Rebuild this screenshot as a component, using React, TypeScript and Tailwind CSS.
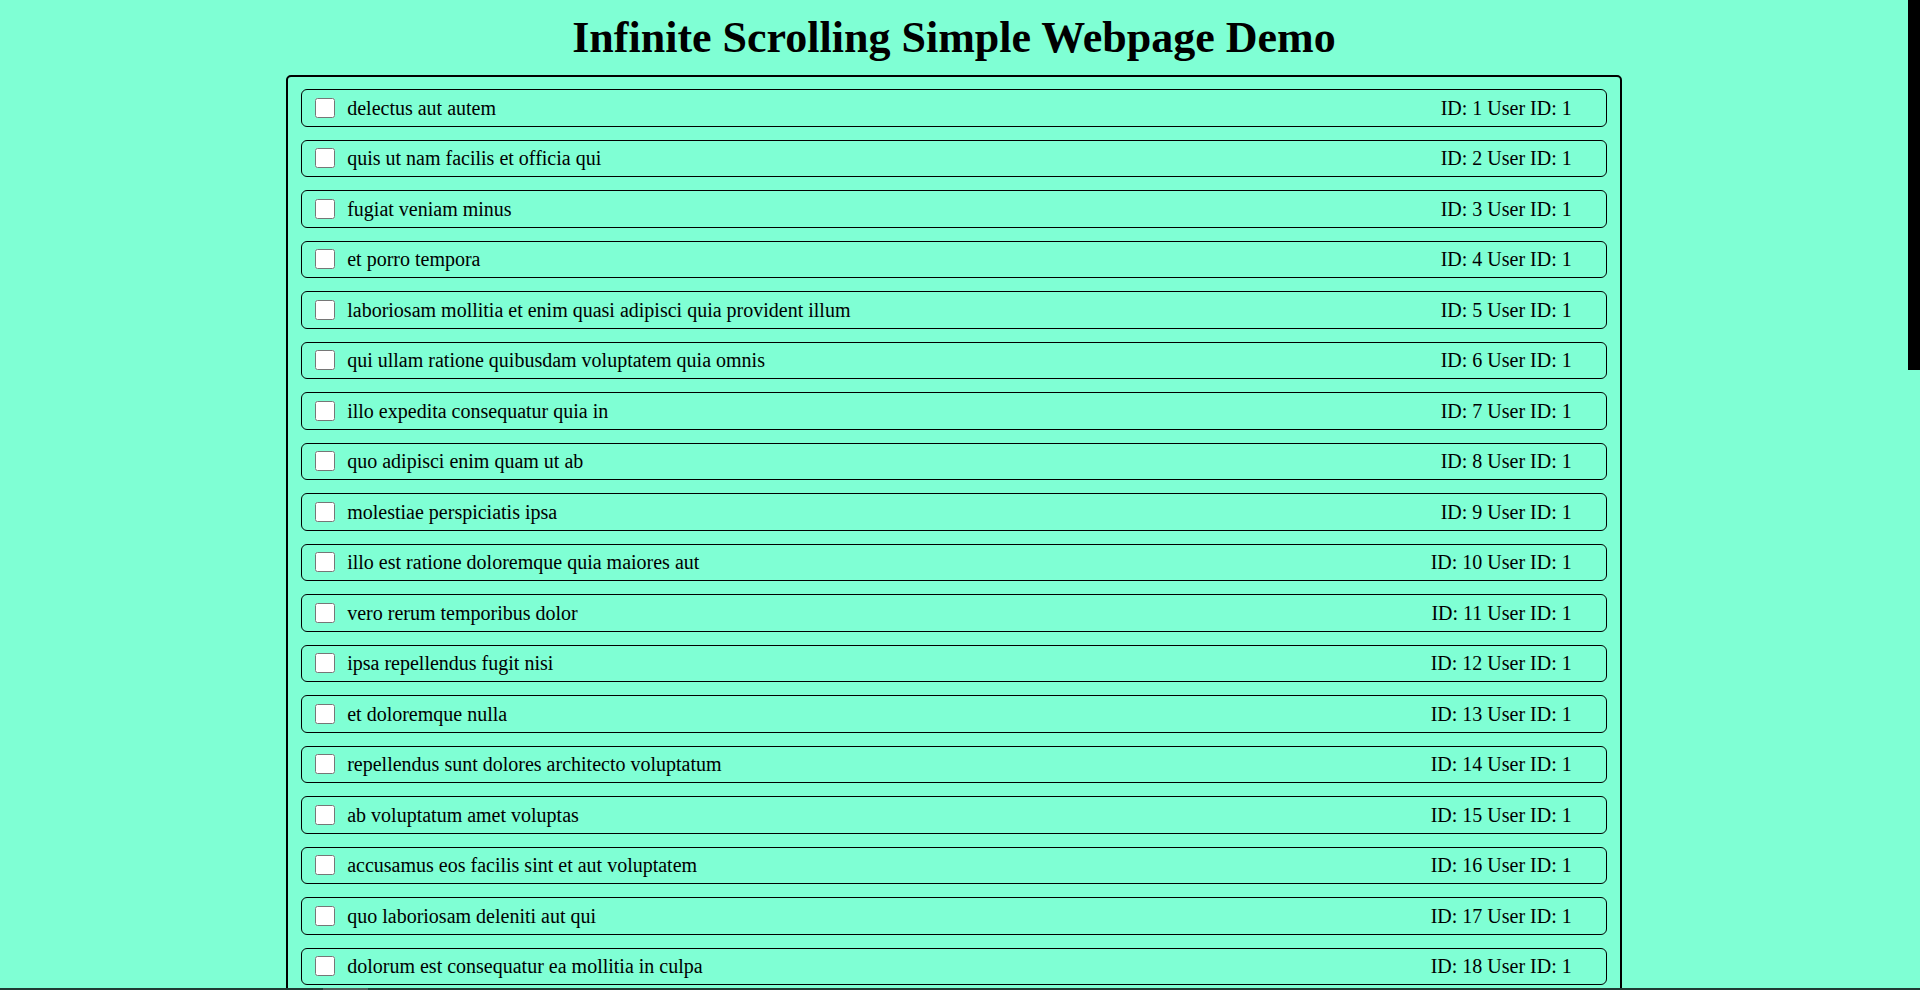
import React from 'react';

const todos: string[] = [
  'delectus aut autem',
  'quis ut nam facilis et officia qui',
  'fugiat veniam minus',
  'et porro tempora',
  'laboriosam mollitia et enim quasi adipisci quia provident illum',
  'qui ullam ratione quibusdam voluptatem quia omnis',
  'illo expedita consequatur quia in',
  'quo adipisci enim quam ut ab',
  'molestiae perspiciatis ipsa',
  'illo est ratione doloremque quia maiores aut',
  'vero rerum temporibus dolor',
  'ipsa repellendus fugit nisi',
  'et doloremque nulla',
  'repellendus sunt dolores architecto voluptatum',
  'ab voluptatum amet voluptas',
  'accusamus eos facilis sint et aut voluptatem',
  'quo laboriosam deleniti aut qui',
  'dolorum est consequatur ea mollitia in culpa',
];

function TodoRow({ id, title }: { id: number; title: string }) {
  return (
    <div className="h-[37.5px] shrink-0 flex items-center border border-black rounded-[6px] pl-[13px] pr-[34px]">
      <input type="checkbox" className="w-5 h-5 m-0 shrink-0" />
      <span className="ml-3 flex-1">{title}</span>
      <span>ID: {id} User ID: 1</span>
    </div>
  );
}

export default function App() {
  return (
    <div
      className="relative flex w-full h-screen overflow-hidden bg-[#7fffd4] text-black text-[20px]"
      style={{ fontFamily: '"Liberation Serif", "Times New Roman", serif' }}
    >
      <main className="flex-1 min-w-0 h-full overflow-hidden">
        <h1 className="text-center font-bold text-[44px] leading-[51px] mt-[12px] mb-[12px]">
          Infinite Scrolling Simple Webpage Demo
        </h1>
        <div className="w-[70%] mx-auto border-2 border-black rounded-[5px] pt-3 px-[13px] pb-3 flex flex-col gap-[13px]">
          {todos.map((t, i) => (
            <TodoRow key={i} id={i + 1} title={t} />
          ))}
        </div>
      </main>

      {/* scrollbar */}
      <div className="w-3 shrink-0 h-full">
        <div className="w-3 h-[370px] bg-black" />
      </div>

      {/* bottom strip */}
      <div className="absolute left-0 right-0 bottom-0 h-[2px] bg-[#1f3a33] flex">
        <div className="ml-[323px] w-[45px] h-full bg-[#4d5c57]" />
      </div>
    </div>
  );
}
